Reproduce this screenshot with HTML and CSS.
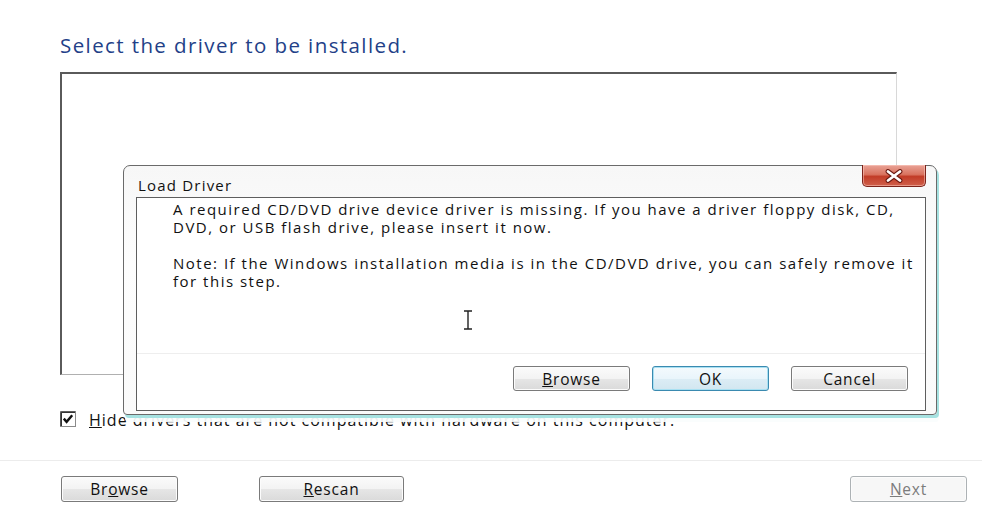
FILE: index.html
```html
<!DOCTYPE html>
<html lang="en">
<head>
  <meta charset="UTF-8">
  <title>Install Windows - Load Driver</title>
  <link rel="stylesheet" href="styles.css">
</head>
<body>

  <div class="setup">
    <h2 class="heading">Select the driver to be installed.</h2>
    <div class="driver-list"></div>

    <label class="hide-row">
      <span class="checkbox">
        <svg width="16" height="16" viewBox="0 0 16 16">
          <rect x="0.5" y="0.5" width="15" height="15" fill="#fff" stroke="#8a8a8a"/>
          <path d="M1.2 1.2 H15 M1.2 1.2 V15" stroke="#333" stroke-width="1.6" fill="none"/>
          <path d="M3.8 7.6 L6.6 10.8 L12.2 4.2" stroke="#111" stroke-width="2.4" fill="none"/>
        </svg>
      </span>
      <span><u>H</u>ide drivers that are not compatible with hardware on this computer.</span>
    </label>
  </div>

  <div class="footer">
    <button class="btn btn-browse">Br<u>o</u>wse</button>
    <button class="btn btn-rescan"><u>R</u>escan</button>
    <span class="spacer"></span>
    <button class="btn btn-next" disabled><u>N</u>ext</button>
  </div>

  <!-- modal window over the setup page -->
  <div class="dialog">
    <div class="dialog-title">
      <span>Load Driver</span>
      <span class="close-btn">
        <svg width="24" height="14" viewBox="0 0 24 14">
          <path d="M6 2.5 L18 11.5 M18 2.5 L6 11.5" stroke="#6b1a12" stroke-width="4.8" stroke-linecap="round"/>
          <path d="M6 2.5 L18 11.5 M18 2.5 L6 11.5" stroke="#fff" stroke-width="2.8" stroke-linecap="round"/>
        </svg>
      </span>
    </div>
    <div class="dialog-body">
      <div class="message">
        <p>A required CD/DVD drive device driver is missing. If you have a driver floppy disk, CD, DVD, or USB flash drive, please insert it now.</p>
        <p>Note: If the Windows installation media is in the CD/DVD drive, you can safely remove it for this step.</p>
        <svg class="ibeam" width="12" height="20" viewBox="0 0 12 20">
          <path d="M2 1 H10 M6 1 V19 M2 19 H10" stroke="#222" stroke-width="1.4" fill="none"/>
        </svg>
      </div>
      <div class="dialog-buttons">
        <button class="btn"><u>B</u>rowse</button>
        <button class="btn btn-ok">OK</button>
        <button class="btn">Cancel</button>
      </div>
    </div>
  </div>

</body>
</html>
```

FILE: styles.css
```css
body {
  margin: 0;
  background: #fff;
  font-family: "Open Sans", "Noto Sans", sans-serif;
  color: #111;
  width: 982px;
  height: 511px;
  overflow: hidden;
  position: relative;
}

.setup {
  padding: 30px 85px 0 60px;
}

.heading {
  margin: 0;
  font-size: 20.5px;
  font-weight: normal;
  line-height: 30px;
  color: #233f88;
  letter-spacing: 1.4px;
}

.driver-list {
  margin-top: 12px;
  height: 300px;
  border-top: 2px solid #5a5a5a;
  border-left: 2px solid #5a5a5a;
  border-right: 1px solid #d8d8d8;
  border-bottom: 1px solid #b0b0b0;
  background: #fff;
}

.hide-row {
  display: flex;
  align-items: center;
  gap: 13px;
  margin-top: 35px;
  font-size: 16px;
  line-height: 20px;
  letter-spacing: 1px;
}

.checkbox {
  display: flex;
  margin-top: -2px;
}

.footer {
  position: absolute;
  left: 0;
  right: 0;
  top: 460px;
  border-top: 1px solid #ececec;
  display: flex;
  padding: 15px 15px 0 61px;
  gap: 81px;
}

.spacer {
  flex: 1;
}

.btn {
  font-family: "Open Sans", "Noto Sans", sans-serif;
  font-size: 15.5px;
  letter-spacing: 0.8px;
  color: #111;
  width: 117px;
  height: 26px;
  padding: 0;
  line-height: 22px;
  border: 1px solid #7a7a7a;
  border-radius: 3px;
  background: linear-gradient(#fbfbfb 0%, #f3f3f3 50%, #e6e6e6 51%, #dadada 100%);
  box-shadow: inset 0 0 0 1px #fcfcfc;
}

.btn-rescan {
  width: 145px;
}

.btn-next {
  color: #7c7c7c;
  border-color: #adb2b5;
  background: #f7f7f7;
}

.dialog {
  position: absolute;
  left: 123px;
  top: 165px;
  width: 812px;
  height: 248px;
  border: 1px solid #6a6a6a;
  border-radius: 7px 7px 4px 4px;
  background: linear-gradient(#f7f7f7, #fdfdfd 40%, #fafafa);
  box-shadow: 2px 3px 0 0 #a6e2e1, 2px 7px 0 0 rgba(250, 253, 253, 0.93);
  display: flex;
  flex-direction: column;
}

.dialog-title {
  height: 31px;
  display: flex;
  align-items: flex-start;
  padding-left: 14px;
  font-size: 15px;
  letter-spacing: 1.2px;
  position: relative;
}

.dialog-title span:first-child {
  margin-top: 9px;
  line-height: 20px;
}

.close-btn {
  position: absolute;
  right: 10px;
  top: -1px;
  width: 62px;
  height: 21px;
  border: 1px solid #7c231a;
  border-top: none;
  border-radius: 0 0 5px 5px;
  background: linear-gradient(#e9a397 0%, #d9735f 45%, #c23c27 55%, #d0604b 100%);
  box-shadow: inset 0 0 0 1px rgba(255, 210, 200, 0.5);
  display: flex;
  align-items: center;
  justify-content: center;
}

.dialog-body {
  margin: 0 10px 3px 12px;
  flex: 1;
  border: 1px solid #5e5e5e;
  background: #fff;
  display: flex;
  flex-direction: column;
}

.message {
  flex: 1;
  padding: 3px 8px 0 36px;
  font-size: 15px;
  letter-spacing: 1.5px;
  line-height: 17.5px;
  position: relative;
}

.message p {
  margin: 0 0 19px 0;
}

.ibeam {
  position: absolute;
  left: 325px;
  top: 112px;
}

.dialog-buttons {
  box-sizing: border-box;
  height: 57px;
  border-top: 1px solid #eeeeee;
  display: flex;
  justify-content: flex-end;
  align-items: flex-start;
  gap: 22px;
  padding: 12px 17px 0 0;
}

.dialog-buttons .btn {
  height: 25px;
}

.btn-ok {
  border-color: #3a8ab0;
  background: linear-gradient(#f4fafd 0%, #e9f5fb 50%, #dcedf5 51%, #d2e6f0 100%);
  box-shadow: inset 0 0 0 1px #a8e0f2;
}
```
